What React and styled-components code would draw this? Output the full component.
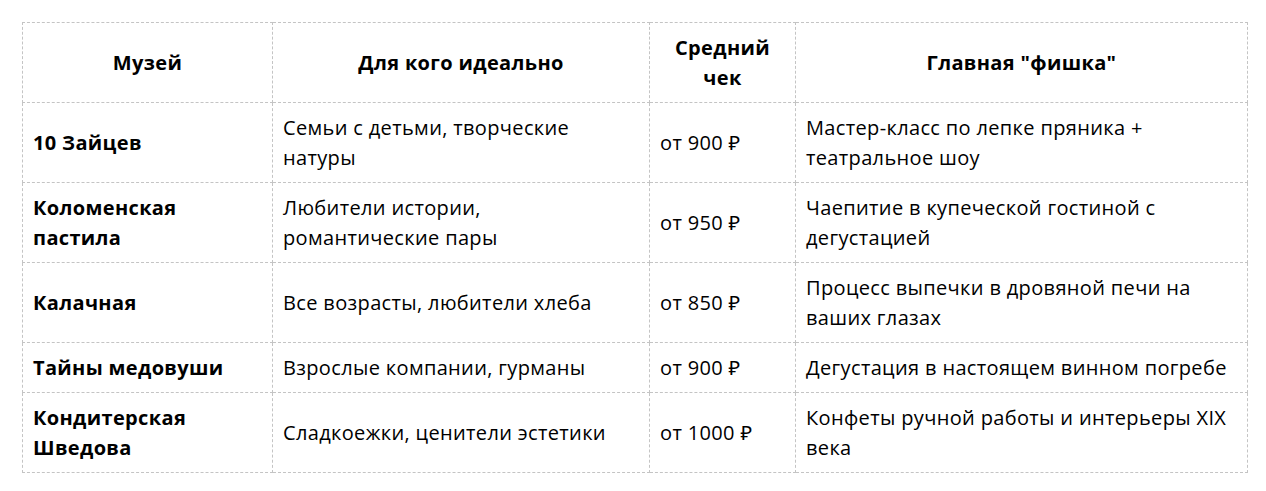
import React from "react";
import styled, { createGlobalStyle } from "styled-components";

const GlobalStyle = createGlobalStyle`
  body {
    margin: 0;
    background: #fff;
    font-family: "Open Sans", "Noto Sans", sans-serif;
    color: #000;
  }
`;

const Wrapper = styled.div`
  padding: 22px;
`;

const Table = styled.table`
  border-collapse: collapse;
  table-layout: fixed;
  width: 1226px;
  font-size: 20px;
  line-height: 30px;
  letter-spacing: 0.35px;
`;

const Th = styled.th`
  border: 1px dashed #c4c4c4;
  padding: 9.5px 10px;
  font-weight: 700;
  text-align: center;
  vertical-align: middle;
`;

const Td = styled.td`
  border: 1px dashed #c4c4c4;
  padding: 9.5px 10px;
  text-align: left;
  vertical-align: middle;
  font-weight: ${(p) => (p.$bold ? 700 : 400)};
`;

const columns = [250, 377, 146, 452];

const rows = [
  ["10 Зайцев", "Семьи с детьми, творческие натуры", "от 900 ₽", "Мастер-класс по лепке пряника + театральное шоу"],
  ["Коломенская пастила", "Любители истории, романтические пары", "от 950 ₽", "Чаепитие в купеческой гостиной с дегустацией"],
  ["Калачная", "Все возрасты, любители хлеба", "от 850 ₽", "Процесс выпечки в дровяной печи на ваших глазах"],
  ["Тайны медовуши", "Взрослые компании, гурманы", "от 900 ₽", "Дегустация в настоящем винном погребе"],
  ["Кондитерская Шведова", "Сладкоежки, ценители эстетики", "от 1000 ₽", "Конфеты ручной работы и интерьеры XIX века"],
];

export default function App() {
  return (
    <Wrapper>
      <GlobalStyle />
      <Table>
        <colgroup>
          {columns.map((w, i) => (
            <col key={i} style={{ width: w }} />
          ))}
        </colgroup>
        <thead>
          <tr>
            <Th>Музей</Th>
            <Th>Для кого идеально</Th>
            <Th>Средний чек</Th>
            <Th>Главная "фишка"</Th>
          </tr>
        </thead>
        <tbody>
          {rows.map((r) => (
            <tr key={r[0]}>
              <Td $bold>{r[0]}</Td>
              <Td>{r[1]}</Td>
              <Td>{r[2]}</Td>
              <Td>{r[3]}</Td>
            </tr>
          ))}
        </tbody>
      </Table>
    </Wrapper>
  );
}
